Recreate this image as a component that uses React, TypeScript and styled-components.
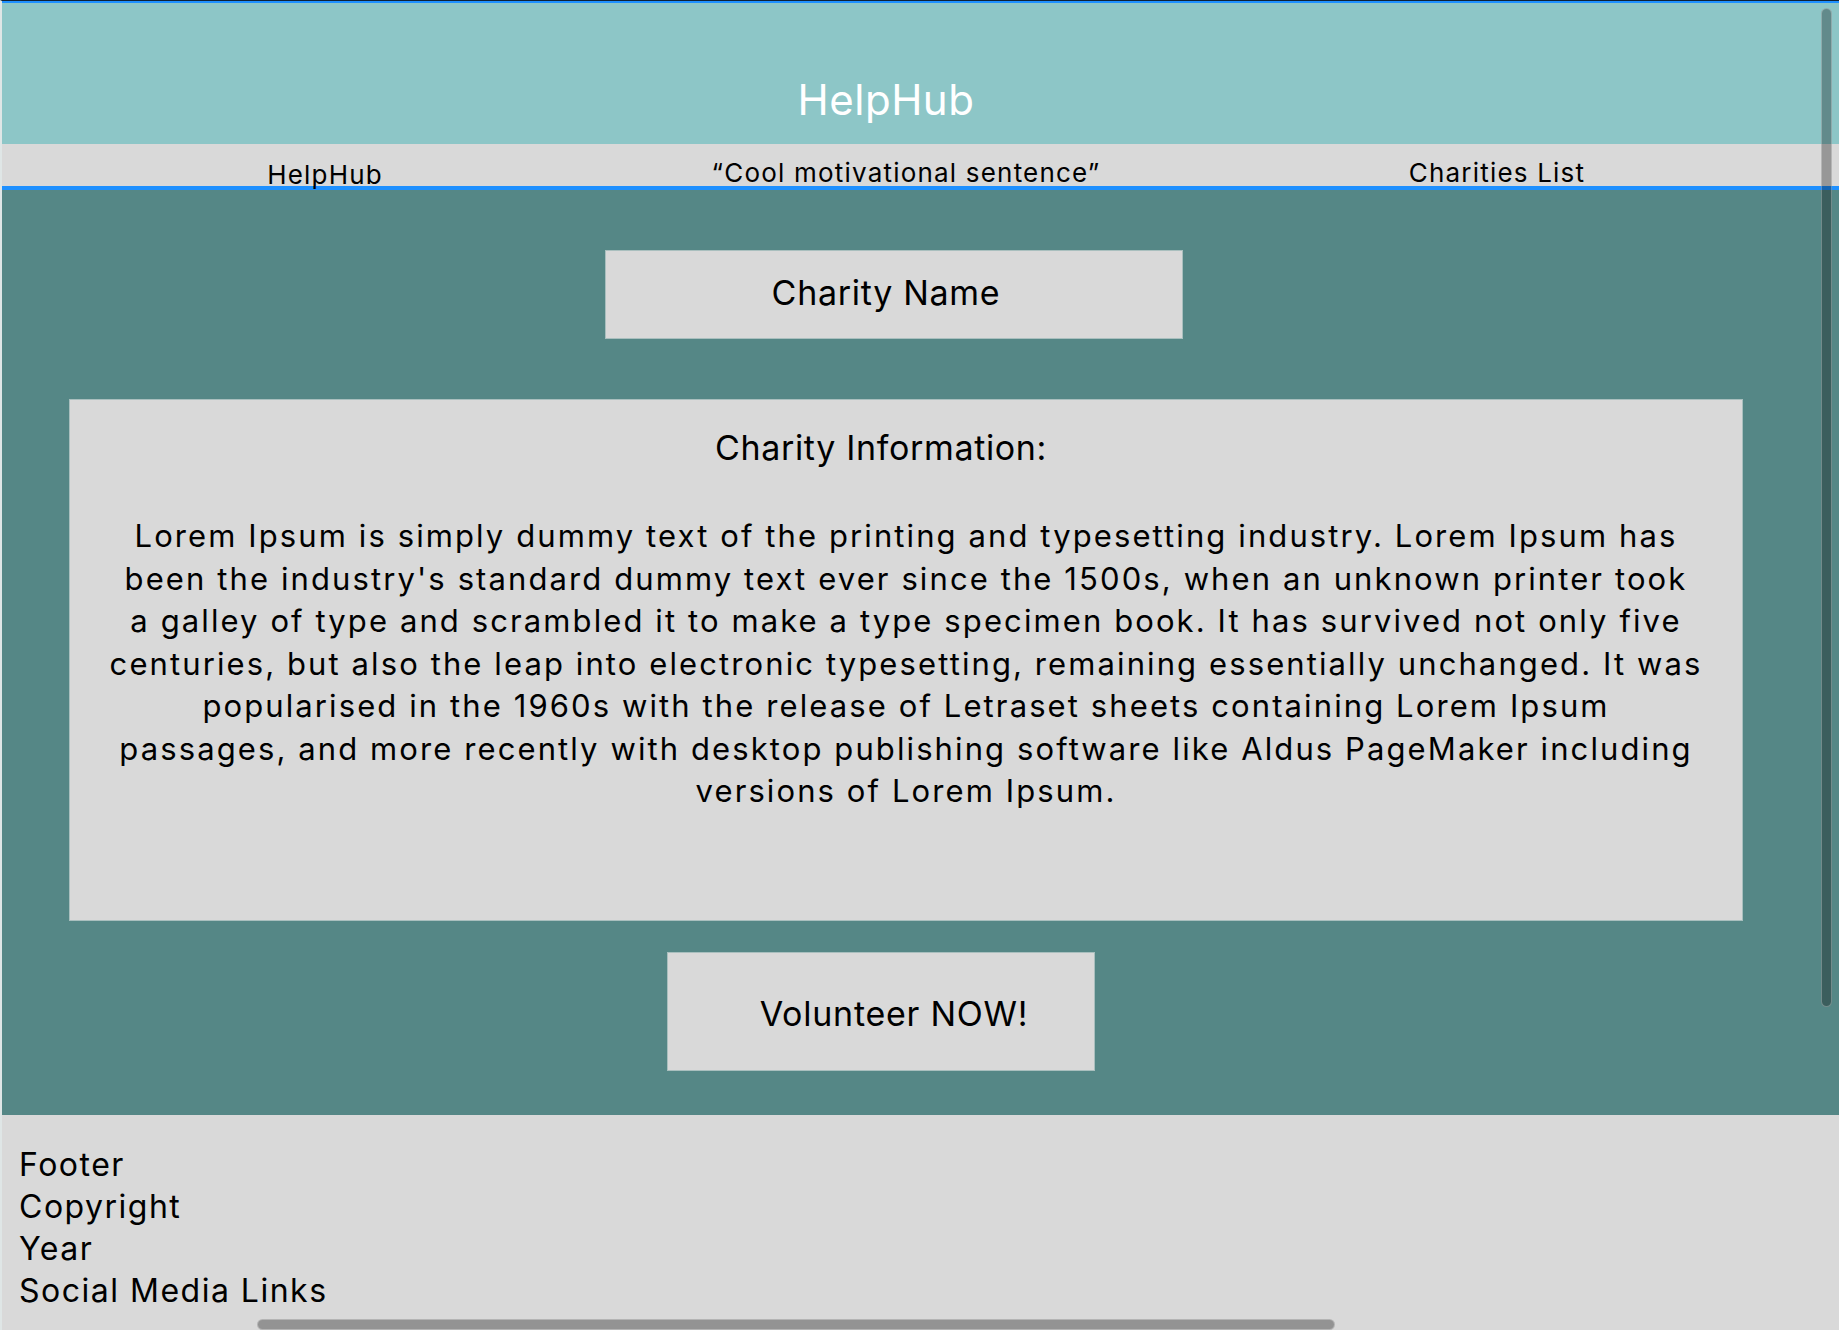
import React from "react";
import styled, { createGlobalStyle } from "styled-components";

const GlobalStyle = createGlobalStyle`
  html, body {
    margin: 0;
    padding: 0;
    overflow: hidden;
    background: #d9d9d9;
  }
  * { box-sizing: border-box; }
  body {
    font-family: Inter, "Noto Sans", "Liberation Sans", sans-serif;
    color: #000;
  }
`;

const Page = styled.div`
  position: relative;
  width: 1839px;
  height: 1330px;
  overflow: hidden;
  border-top: 1px solid #0f2236;
  border-left: 2px solid #dfe6e6;
  display: flex;
  flex-direction: column;
`;

const Header = styled.header`
  height: 143px;
  flex: none;
  background: #8dc6c7;
  border-top: 2px solid #1e90ff;
  padding-top: 71px;
  padding-right: 69px;
  text-align: center;
`;

const Title = styled.h1`
  margin: 0;
  font-size: 42px;
  font-weight: 400;
  line-height: 51px;
  letter-spacing: 0.5px;
  color: #ffffff;
`;

const Nav = styled.nav`
  height: 46px;
  flex: none;
  background: #d9d9d9;
  border-bottom: 4px solid #1e90ff;
  display: grid;
  grid-template-columns: repeat(3, 586px);
  justify-items: center;
  align-items: start;
  padding-left: 30px;
  padding-top: 13px;
`;

const NavItem = styled.span<{ $drop?: number; $shift?: number }>`
  font-size: 26px;
  line-height: 31px;
  letter-spacing: 1.2px;
  white-space: nowrap;
  margin-top: ${(p) => p.$drop ?? 0}px;
  margin-right: ${(p) => p.$shift ?? 0}px;
`;

const Main = styled.main`
  height: 925px;
  flex: none;
  background: #558786;
  display: flex;
  flex-direction: column;
  align-items: flex-start;
  padding-top: 60px;
`;

const Panel = styled.div`
  background: #d9d9d9;
  border: 1px solid #a9bfbe;
`;

const NameBox = styled(Panel)`
  margin-left: 603px;
  width: 578px;
  height: 89px;
  display: flex;
  align-items: center;
  justify-content: center;
  padding: 0 16px 4px 0;
  font-size: 34px;
  line-height: 41px;
  letter-spacing: 0.7px;
`;

const InfoBox = styled(Panel)`
  margin-top: 60px;
  margin-left: 67px;
  width: 1674px;
  height: 522px;
  padding-top: 27px;
  text-align: center;
`;

const InfoHeading = styled.h2`
  margin: 0;
  padding-right: 50px;
  font-size: 34px;
  font-weight: 400;
  line-height: 41px;
  letter-spacing: 0.65px;
`;

const InfoText = styled.p`
  margin: 47px 0 0;
  font-size: 31px;
  line-height: 42.5px;
  letter-spacing: 2.1px;
  white-space: nowrap;
`;

const VolunteerButton = styled(Panel)`
  margin-top: 31px;
  margin-left: 665px;
  width: 428px;
  height: 119px;
  display: flex;
  align-items: center;
  justify-content: center;
  padding: 3px 0 0 26px;
  font-size: 34px;
  line-height: 41px;
  letter-spacing: 0.75px;
  cursor: pointer;
`;

const Footer = styled.footer`
  flex: 1;
  background: #d9d9d9;
  padding: 29px 0 0 17px;
  font-size: 32px;
  line-height: 42px;
  letter-spacing: 1.5px;
`;

const FooterLine = styled.div``;

const VScrollThumb = styled.div`
  position: absolute;
  left: 1819px;
  top: 7px;
  width: 11px;
  height: 999px;
  border-radius: 6px;
  background: rgba(0, 0, 0, 0.3);
  border: 1px solid rgba(255, 255, 255, 0.28);
`;

const HScrollThumb = styled.div`
  position: absolute;
  left: 255px;
  bottom: 0;
  width: 1078px;
  height: 11px;
  border-radius: 6px;
  background: rgba(0, 0, 0, 0.32);
  border: 1px solid rgba(255, 255, 255, 0.3);
`;

const loremLines = [
  "Lorem Ipsum is simply dummy text of the printing and typesetting industry. Lorem Ipsum has",
  "been the industry's standard dummy text ever since the 1500s, when an unknown printer took",
  "a galley of type and scrambled it to make a type specimen book. It has survived not only five",
  "centuries, but also the leap into electronic typesetting, remaining essentially unchanged. It was",
  "popularised in the 1960s with the release of Letraset sheets containing Lorem Ipsum",
  "passages, and more recently with desktop publishing software like Aldus PageMaker including",
  "versions of Lorem Ipsum.",
];

export default function App() {
  return (
    <>
      <GlobalStyle />
      <Page>
        <Header>
          <Title>HelpHub</Title>
        </Header>
        <Nav>
          <NavItem $drop={2}>HelpHub</NavItem>
          <NavItem $shift={10}>“Cool motivational sentence”</NavItem>
          <NavItem>Charities List</NavItem>
        </Nav>
        <Main>
          <NameBox>Charity Name</NameBox>
          <InfoBox>
            <InfoHeading>Charity Information:</InfoHeading>
            <InfoText>
              {loremLines.map((line, i) => (
                <React.Fragment key={i}>
                  {line}
                  {i < loremLines.length - 1 && <br />}
                </React.Fragment>
              ))}
            </InfoText>
          </InfoBox>
          <VolunteerButton>Volunteer NOW!</VolunteerButton>
        </Main>
        <Footer>
          <FooterLine>Footer</FooterLine>
          <FooterLine>Copyright</FooterLine>
          <FooterLine>Year</FooterLine>
          <FooterLine>Social Media Links</FooterLine>
        </Footer>
        <VScrollThumb />
        <HScrollThumb />
      </Page>
    </>
  );
}
